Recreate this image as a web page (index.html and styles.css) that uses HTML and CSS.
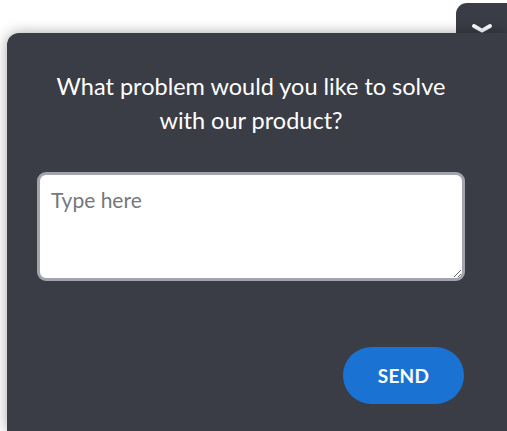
FILE: index.html
```html
<!DOCTYPE html>
<html>
<head>
<meta charset="utf-8">
<link rel="stylesheet" href="styles.css">
</head>
<body>
<div class="widget">
  <div class="tab-row">
    <button class="tab" aria-label="Collapse">
      <svg width="20" height="9" viewBox="0 0 20 9"><polyline points="2,2 10,6.6 18,2" fill="none" stroke="#ffffff" stroke-width="3.8" stroke-linecap="round" stroke-linejoin="round"/></svg>
    </button>
  </div>
  <div class="panel">
    <h2 class="question">What problem would you like to solve<br>with our product?</h2>
    <textarea class="answer" placeholder="Type here"></textarea>
    <div class="actions">
      <button class="send">SEND</button>
    </div>
  </div>
</div>
</body>
</html>
```
FILE: styles.css
```css
html, body {
  margin: 0;
  padding: 0;
  background: #ffffff;
  overflow: hidden;
}
body {
  font-family: "Lato", "Liberation Sans", sans-serif;
}
.widget {
  padding: 3px 0 0 7px;
  height: 431px;
  box-sizing: border-box;
  display: flex;
  flex-direction: column;
}
.tab-row {
  display: flex;
  justify-content: flex-end;
}
.tab {
  width: 51px;
  height: 30px;
  border: none;
  margin: 0;
  padding: 0 0 0 0;
  background: #3a3d46;
  border-radius: 11px 0 0 0;
  display: flex;
  align-items: flex-end;
  justify-content: center;
}
.tab svg {
  display: block;
}
.panel {
  flex: 1;
  background: #3a3d46;
  border-radius: 12px 0 0 0;
  box-shadow: 0 0 14px rgba(0, 0, 0, 0.35);
  padding: 36px 42px 0 30px;
  display: flex;
  flex-direction: column;
}
.question {
  margin: 0;
  color: #ffffff;
  font-weight: 400;
  font-size: 23.5px;
  line-height: 34px;
  text-align: center;
}
.answer {
  margin-top: 35px;
  height: 109px;
  box-sizing: border-box;
  border: 3px solid #a2a5ad;
  border-radius: 9px;
  padding: 12px 11px;
  font-family: inherit;
  font-size: 21px;
  color: #333;
  background: #ffffff;
  outline: none;
}
.answer::placeholder {
  color: #76787d;
}
.actions {
  display: flex;
  justify-content: flex-end;
  margin-top: 66px;
  padding-right: 1px;
}
.send {
  width: 121px;
  height: 57px;
  border: none;
  border-radius: 29px;
  background: #1a72d3;
  color: #ffffff;
  font-family: inherit;
  font-weight: 700;
  font-size: 19px;
  letter-spacing: 0.3px;
}
```
